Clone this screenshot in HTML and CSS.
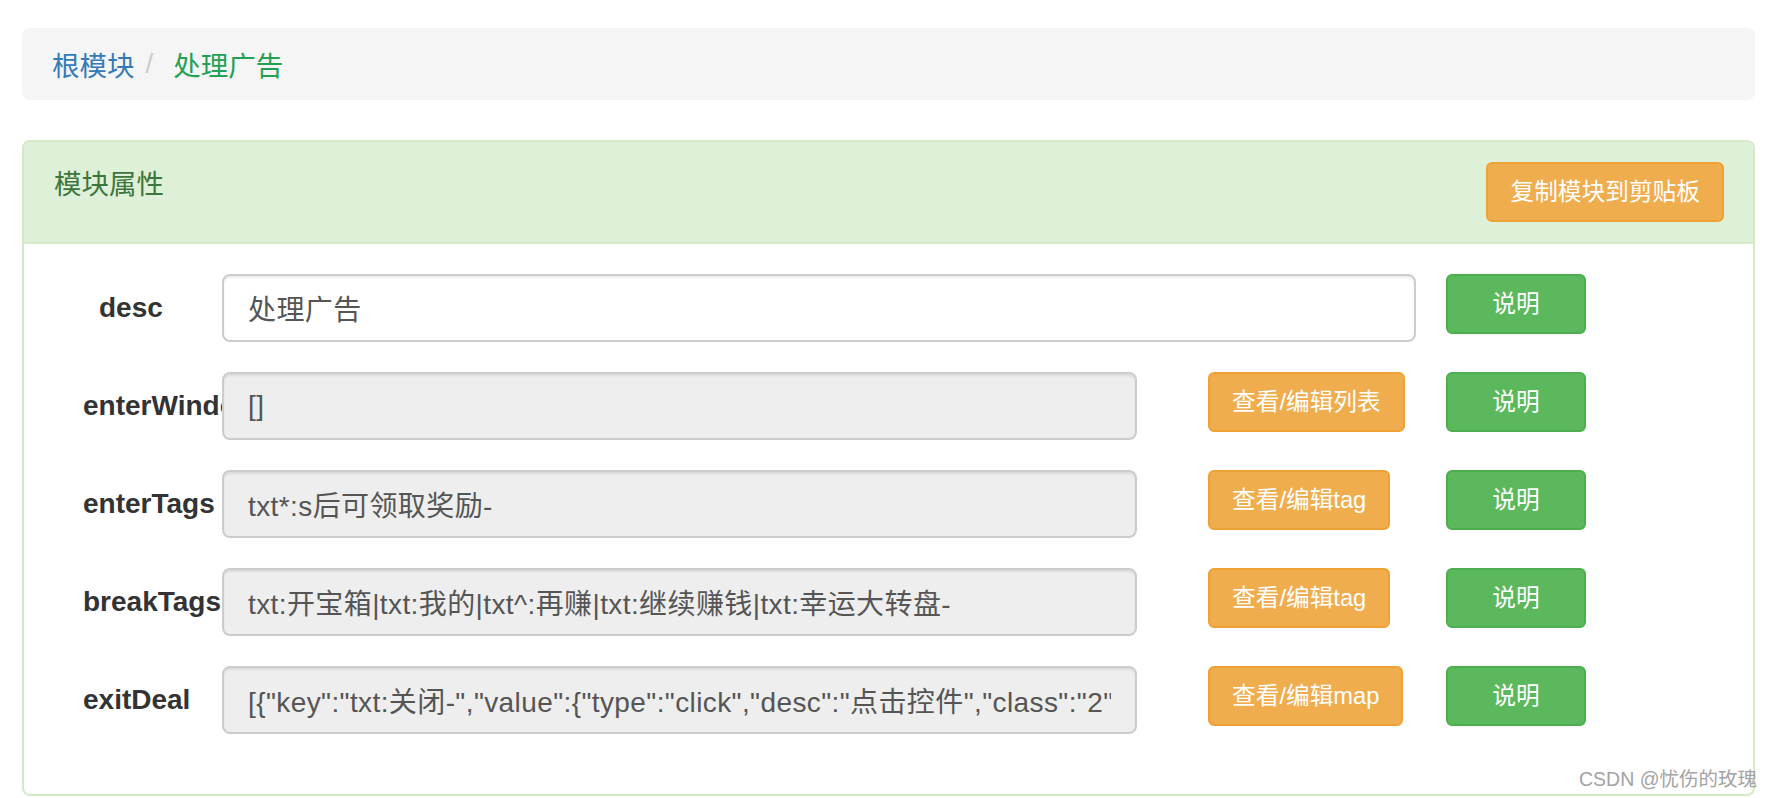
FILE: index.html
```html
<!DOCTYPE html>
<html lang="zh-CN">
<head>
<meta charset="utf-8">
<title>处理广告</title>
<link rel="stylesheet" href="styles.css">
</head>
<body>
<div class="page">
  <ol class="breadcrumb">
    <li class="crumb"><a class="crumb-link" href="#">根模块</a></li>
    <li class="crumb crumb-sep">/</li>
    <li class="crumb crumb-active">处理广告</li>
  </ol>

  <div class="panel">
    <div class="panel-heading">
      <h3 class="panel-title">模块属性</h3>
      <button class="btn btn-warning">复制模块到剪贴板</button>
    </div>
    <div class="panel-body">
      <div class="form-row">
        <label class="field-label field-label-desc">desc</label>
        <input class="field-input field-input-wide" type="text" value="处理广告">
        <button class="btn btn-success btn-help">说明</button>
      </div>
      <div class="form-row">
        <label class="field-label">enterWindows</label>
        <input class="field-input" type="text" value="[]" readonly>
        <div class="tool-cell"><button class="btn btn-warning">查看/编辑列表</button></div>
        <button class="btn btn-success btn-help">说明</button>
      </div>
      <div class="form-row">
        <label class="field-label">enterTags</label>
        <input class="field-input" type="text" value="txt*:s后可领取奖励-" readonly>
        <div class="tool-cell"><button class="btn btn-warning">查看/编辑tag</button></div>
        <button class="btn btn-success btn-help">说明</button>
      </div>
      <div class="form-row">
        <label class="field-label">breakTags</label>
        <input class="field-input" type="text" value="txt:开宝箱|txt:我的|txt^:再赚|txt:继续赚钱|txt:幸运大转盘-" readonly>
        <div class="tool-cell"><button class="btn btn-warning">查看/编辑tag</button></div>
        <button class="btn btn-success btn-help">说明</button>
      </div>
      <div class="form-row">
        <label class="field-label">exitDeal</label>
        <input class="field-input" type="text" value='[{"key":"txt:关闭-","value":{"type":"click","desc":"点击控件","class":"2"}}]' readonly>
        <div class="tool-cell"><button class="btn btn-warning">查看/编辑map</button></div>
        <button class="btn btn-success btn-help">说明</button>
      </div>
    </div>
  </div>
</div>
<div class="watermark">CSDN @忧伤的玫瑰</div>
</body>
</html>
```

FILE: styles.css
```css
html, body {
  margin: 0;
  padding: 0;
  background: #ffffff;
}

body {
  font-family: "Liberation Sans", "Noto Sans CJK SC", sans-serif;
  color: #333333;
  width: 1774px;
  height: 798px;
  overflow: hidden;
  position: relative;
}

.page {
  padding: 28px 19px 0 22px;
}

/* Breadcrumb */
.breadcrumb {
  list-style: none;
  margin: 0 0 40px 0;
  padding: 16px 30px;
  background: #f5f5f5;
  border-radius: 8px;
  display: flex;
  align-items: center;
  font-family: "Noto Sans CJK SC", "Liberation Sans", sans-serif;
  font-size: 27.5px;
  line-height: 40px;
  height: 72px;
  box-sizing: border-box;
}

.crumb-link {
  color: #337ab7;
  text-decoration: none;
}

.crumb-sep {
  color: #cccccc;
  padding: 0 20px 0 11px;
  font-family: "Liberation Sans", sans-serif;
}

.crumb-active {
  color: #23a153;
}

/* Panel */
.panel {
  border: 2px solid #d6e9c6;
  border-radius: 8px;
  background: #ffffff;
}

.panel-heading {
  background: #dff0d8;
  border-bottom: 2px solid #d6e9c6;
  border-radius: 6px 6px 0 0;
  padding: 20px 29px 20px 30px;
  display: flex;
  justify-content: space-between;
  align-items: flex-start;
}

.panel-title {
  margin: 0;
  font-weight: normal;
  font-family: "Noto Sans CJK SC", "Liberation Sans", sans-serif;
  font-size: 27.5px;
  line-height: 40px;
  color: #3c763d;
}

.panel-body {
  padding: 30px;
}

/* Buttons */
.btn {
  box-sizing: border-box;
  height: 60px;
  padding: 0 22px;
  border-radius: 6px;
  border: 2px solid transparent;
  font-family: "Liberation Sans", "Noto Sans CJK SC", sans-serif;
  font-size: 23.7px;
  line-height: 56px;
  color: #ffffff;
  white-space: nowrap;
  cursor: pointer;
}

.btn-warning {
  background: #f0ad4e;
  border-color: #eea236;
}

.btn-success {
  background: #5cb85c;
  border-color: #4cae4c;
}

.btn-help {
  width: 140px;
  margin-left: 30px;
  padding: 0;
}

/* Form rows */
.form-row {
  display: flex;
  align-items: flex-start;
  margin-bottom: 30px;
}

.field-label {
  box-sizing: border-box;
  width: 168px;
  padding-left: 29px;
  height: 68px;
  line-height: 68px;
  font-size: 28px;
  font-weight: bold;
  color: #333333;
  white-space: nowrap;
  overflow: hidden;
}

.field-label-desc {
  padding-left: 45px;
}

.field-input {
  box-sizing: border-box;
  width: 915px;
  height: 68px;
  margin: 0;
  padding: 0 24px;
  border: 2px solid #cccccc;
  border-radius: 8px;
  background: #eeeeee;
  box-shadow: inset 0 2px 2px rgba(0, 0, 0, 0.075);
  font-family: "Liberation Sans", "Noto Sans CJK SC", sans-serif;
  font-size: 28px;
  letter-spacing: 0.4px;
  color: #555555;
  outline: none;
}

.field-input-wide {
  width: 1194px;
  background: #ffffff;
}

.tool-cell {
  box-sizing: border-box;
  width: 279px;
  padding-left: 71px;
  display: flex;
}

/* Watermark */
.watermark {
  position: absolute;
  right: 17px;
  top: 765px;
  font-family: "Liberation Sans", "Noto Sans CJK SC", sans-serif;
  font-size: 19.5px;
  line-height: 28px;
  color: #a3a3a3;
}
```
